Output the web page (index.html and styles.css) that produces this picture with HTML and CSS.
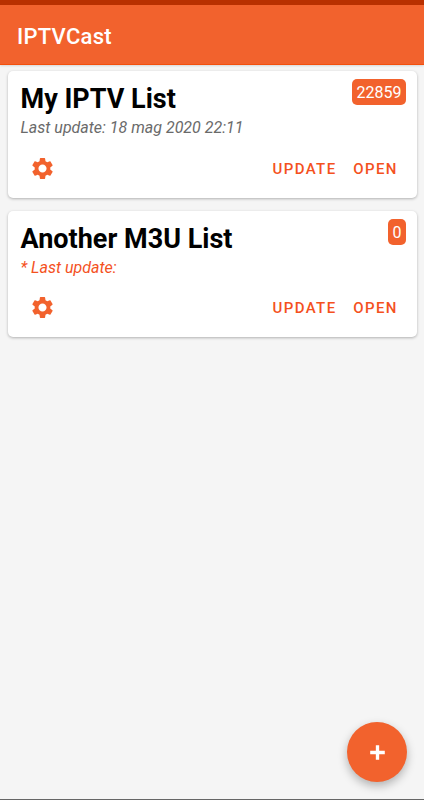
FILE: index.html
```html
<!DOCTYPE html>
<html lang="en">
<head>
<meta charset="utf-8">
<title>IPTVCast</title>
<link rel="stylesheet" href="styles.css">
</head>
<body>
<header class="app-bar"><h1 class="app-title">IPTVCast</h1></header>
<main class="lists">
  <article class="card">
    <h2 class="card-title">My IPTV List</h2>
    <p class="card-date">Last update: 18 mag 2020 22:11</p>
    <span class="badge">22859</span>
    <div class="actions">
      <button class="gear" aria-label="Settings"><svg viewBox="0 0 24 24"><path d="M19.43 12.98c.04-.32.07-.64.07-.98s-.03-.66-.07-.98l2.11-1.65c.19-.15.24-.42.12-.64l-2-3.46c-.12-.22-.39-.3-.61-.22l-2.49 1c-.52-.4-1.08-.73-1.69-.98l-.38-2.65C14.46 2.18 14.25 2 14 2h-4c-.25 0-.46.18-.49.42l-.38 2.65c-.61.25-1.17.59-1.69.98l-2.49-1c-.23-.09-.49 0-.61.22l-2 3.46c-.13.22-.07.49.12.64l2.11 1.65c-.04.32-.07.65-.07.98s.03.66.07.98l-2.11 1.65c-.19.15-.24.42-.12.64l2 3.46c.12.22.39.3.61.22l2.49-1c.52.4 1.08.73 1.69.98l.38 2.65c.03.24.24.42.49.42h4c.25 0 .46-.18.49-.42l.38-2.65c.61-.25 1.17-.59 1.69-.98l2.49 1c.23.09.49 0 .61-.22l2-3.46c.12-.22.07-.49-.12-.64l-2.11-1.65zM12 15.9c-2.15 0-3.9-1.75-3.9-3.9s1.75-3.9 3.9-3.9 3.9 1.75 3.9 3.9-1.75 3.9-3.9 3.9z"/></svg></button>
      <button class="action update">UPDATE</button>
      <button class="action">OPEN</button>
    </div>
  </article>
  <article class="card">
    <h2 class="card-title">Another M3U List</h2>
    <p class="card-date pending">* Last update:</p>
    <span class="badge">0</span>
    <div class="actions">
      <button class="gear" aria-label="Settings"><svg viewBox="0 0 24 24"><path d="M19.43 12.98c.04-.32.07-.64.07-.98s-.03-.66-.07-.98l2.11-1.65c.19-.15.24-.42.12-.64l-2-3.46c-.12-.22-.39-.3-.61-.22l-2.49 1c-.52-.4-1.08-.73-1.69-.98l-.38-2.65C14.46 2.18 14.25 2 14 2h-4c-.25 0-.46.18-.49.42l-.38 2.65c-.61.25-1.17.59-1.69.98l-2.49-1c-.23-.09-.49 0-.61.22l-2 3.46c-.13.22-.07.49.12.64l2.11 1.65c-.04.32-.07.65-.07.98s.03.66.07.98l-2.11 1.65c-.19.15-.24.42-.12.64l2 3.46c.12.22.39.3.61.22l2.49-1c.52.4 1.08.73 1.69.98l.38 2.65c.03.24.24.42.49.42h4c.25 0 .46-.18.49-.42l.38-2.65c.61-.25 1.17-.59 1.69-.98l2.49 1c.23.09.49 0 .61-.22l2-3.46c.12-.22.07-.49-.12-.64l-2.11-1.65zM12 15.9c-2.15 0-3.9-1.75-3.9-3.9s1.75-3.9 3.9-3.9 3.9 1.75 3.9 3.9-1.75 3.9-3.9 3.9z"/></svg></button>
      <button class="action update">UPDATE</button>
      <button class="action">OPEN</button>
    </div>
  </article>
</main>
<button class="fab" aria-label="Add list"><svg viewBox="0 0 24 24"><path d="M12 5v14M5 12h14"/></svg></button>
</body>
</html>
```
FILE: styles.css
```css
* { box-sizing: border-box; }
html, body { height: 100%; }
body {
  margin: 0;
  overflow: hidden;
  background: #f5f5f5;
  border-bottom: 1px solid #666;
  font-family: Roboto, sans-serif;
}
.app-bar {
  height: 65px;
  border-top: 5px solid #b93000;
  border-bottom: 1px solid #f4500c;
  background: #f2622d;
  box-shadow: 0 1px 2px rgba(0, 0, 0, .12);
  display: flex;
  align-items: center;
  padding: 4px 17px 0;
}
.app-title {
  margin: 0;
  color: #fff;
  font-size: 22px;
  line-height: 26px;
  font-weight: 500;
  letter-spacing: .25px;
}
.lists {
  display: flex;
  flex-direction: column;
  gap: 13px;
  padding: 6.4px 7px 0 7.5px;
}
.card {
  position: relative;
  height: 126.5px;
  padding: 12px 11px 0 13px;
  border-radius: 5px;
  background: #fff;
  box-shadow: 0 1px 3px rgba(0, 0, 0, .28);
}
.card-title {
  margin: 0;
  font-size: 27px;
  line-height: 32px;
  font-weight: 700;
  color: #000;
}
.card-date {
  margin: 3px 0 0;
  font-size: 16px;
  line-height: 20px;
  font-style: italic;
  color: #6a6a6a;
}
.card-date.pending { color: #f4511e; }
.badge {
  position: absolute;
  top: 8px;
  right: 11px;
  height: 26px;
  padding: 1px 4.5px 0;
  border-radius: 5px;
  background: #f2622d;
  color: #fff;
  font-size: 16px;
  line-height: 26px;
}
.actions {
  display: flex;
  align-items: center;
  height: 36px;
  margin-top: 12px;
}
button { border: 0; padding: 0; background: none; font-family: inherit; }
.gear { width: 25px; height: 25px; margin: 0 auto 0 9px; }
.gear svg { display: block; width: 25px; height: 25px; fill: #f2622d; }
.action {
  width: 61px;
  padding-top: 1px;
  color: #f4511e;
  font-size: 15px;
  font-weight: 500;
  letter-spacing: 1.4px;
  white-space: nowrap;
}
.update { width: 81px; }
.fab {
  position: absolute;
  right: 17px;
  bottom: 18px;
  width: 60px;
  height: 60px;
  border-radius: 50%;
  display: grid;
  place-items: center;
  background: #f2622d;
  box-shadow: 0 4px 10px rgba(0, 0, 0, .28);
}
.fab svg { width: 25px; height: 25px; fill: none; stroke: #fff; stroke-width: 3.2; }
```
